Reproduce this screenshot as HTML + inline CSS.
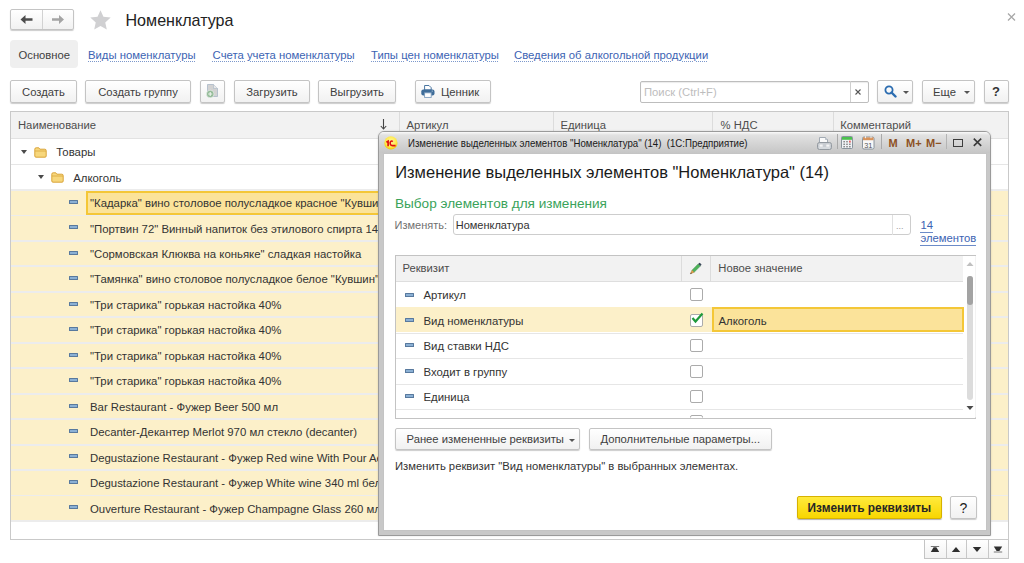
<!DOCTYPE html>
<html><head><meta charset="utf-8">
<style>
*{box-sizing:border-box;margin:0;padding:0}
html,body{width:1024px;height:563px;overflow:hidden;background:#fff}
body{position:relative;font-family:"Liberation Sans",sans-serif;font-size:11.25px;color:#333}
.a{position:absolute}
.t{position:absolute;white-space:nowrap;line-height:1}
.btn{position:absolute;border:1px solid #c4c4c4;border-radius:2px;background:linear-gradient(#ffffff,#f1f1f1);box-shadow:0 1px 1px rgba(0,0,0,.2);color:#404040;white-space:nowrap;line-height:1}
.lnk{position:absolute;white-space:nowrap;line-height:1;font-size:11.32px;color:#3c63b3;text-decoration:underline dotted #7c98cc;text-underline-offset:1.5px;text-decoration-thickness:1px}
.row{position:absolute;left:11px;width:996px}
.dash{position:absolute;width:9px;height:4px;background:#8bb0d4;border:1px solid #58799e;border-radius:0.5px}
.folder{position:absolute;width:12px;height:10px}
.tri{position:absolute;width:0;height:0;border-left:3.5px solid transparent;border-right:3.5px solid transparent;border-top:4px solid #4a4a4a}
.cb{position:absolute;width:13px;height:13px;border:1px solid #ababab;background:#fff;border-radius:2px}
</style></head><body>

<!-- nav buttons -->
<div class="btn" style="left:10px;top:9px;width:64px;height:21px"></div>
<div class="a" style="left:42px;top:10px;width:1px;height:19px;background:#d2d2d2"></div>
<svg class="a" style="left:20px;top:14px" width="14" height="11" viewBox="0 0 14 11"><path d="M0.5 5.5 L5.5 1 L5.5 4.2 L12.5 4.2 L12.5 6.8 L5.5 6.8 L5.5 10 Z" fill="#4d4d4d"/></svg>
<svg class="a" style="left:51px;top:14px" width="14" height="11" viewBox="0 0 14 11"><path d="M13 5.5 L8 1 L8 4.2 L1 4.2 L1 6.8 L8 6.8 L8 10 Z" fill="#a4a4a4"/></svg>
<!-- star -->
<svg class="a" style="left:89.8px;top:9.6px" width="21" height="21" viewBox="0 0 21 21"><path d="M10.50 0.20 L13.44 6.85 L20.68 7.59 L15.26 12.45 L16.79 19.56 L10.50 15.90 L4.21 19.56 L5.74 12.45 L0.32 7.59 L7.56 6.85 Z" fill="#d0d0d2"/></svg>
<div class="t" style="left:125.5px;top:12.4px;font-size:16.1px;color:#222">Номенклатура</div>
<svg class="a" style="left:1007px;top:13px" width="9" height="8" viewBox="0 0 9 8"><path d="M1 0.5 L8 7.5 M8 0.5 L1 7.5" stroke="#a8a8a8" stroke-width="1.3"/></svg>

<!-- tabs -->
<div class="a" style="left:10px;top:40px;width:68px;height:28px;background:#efefef;border-radius:4px"></div>
<div class="t" style="left:18.5px;top:49.5px;color:#404040">Основное</div>
<div class="lnk" style="left:88px;top:49.5px">Виды номенклатуры</div>
<div class="lnk" style="left:212.6px;top:49.5px">Счета учета номенклатуры</div>
<div class="lnk" style="left:371px;top:49.5px">Типы цен номенклатуры</div>
<div class="lnk" style="left:514px;top:49.5px">Сведения об алкогольной продукции</div>

<!-- toolbar -->
<div class="btn" style="left:10px;top:80px;width:67px;height:22.6px"></div><div class="t" style="left:10px;width:67px;text-align:center;top:87px;color:#404040">Создать</div>
<div class="btn" style="left:85px;top:80px;width:106px;height:22.6px"></div><div class="t" style="left:85px;width:106px;text-align:center;top:87px;color:#404040">Создать группу</div>
<div class="btn" style="left:200px;top:80px;width:25px;height:22.6px"></div>
<svg class="a" style="left:205px;top:84px" width="14" height="14" viewBox="0 0 14 14"><path d="M2.5 0.5 L8.5 0.5 L12.5 4.5 L12.5 12.5 L2.5 12.5 Z" fill="#d2d2d2" stroke="#a9b8c8" stroke-width="0.8"/><path d="M8.5 0.5 L8.5 4.5 L12.5 4.5" fill="#e8e8e8" stroke="#a9b8c8" stroke-width="0.6"/><circle cx="5.2" cy="10" r="3.8" fill="#94bb98" stroke="#f4f4f4" stroke-width="0.6"/><path d="M3.2 10 H7.2 M5.2 8 V12" stroke="#eef5ee" stroke-width="1.1"/></svg>
<div class="btn" style="left:234px;top:80px;width:76px;height:22.6px"></div><div class="t" style="left:234px;width:76px;text-align:center;top:87px;color:#404040">Загрузить</div>
<div class="btn" style="left:318px;top:80px;width:78px;height:22.6px"></div><div class="t" style="left:318px;width:78px;text-align:center;top:87px;color:#404040">Выгрузить</div>
<div class="btn" style="left:415px;top:80px;width:76px;height:22.6px"></div><div class="t" style="left:441px;top:87px;color:#404040">Ценник</div>
<svg class="a" style="left:421px;top:85px" width="14" height="13" viewBox="0 0 14 13"><path d="M3.6 0.5 L8 0.5 L10.2 2.7 L10.2 5 L3.6 5 Z" fill="#fff" stroke="#4a76a0" stroke-width="1"/><rect x="0.3" y="4.6" width="13.2" height="5.8" rx="2" fill="#3f6d99"/><rect x="3.6" y="7.8" width="6.6" height="4.6" fill="#fff" stroke="#7c9cbc" stroke-width="0.9"/><rect x="10.6" y="5.6" width="1.3" height="1" fill="#a9c0d6"/></svg>
<div class="a" style="left:640px;top:80.5px;width:228.5px;height:22px;border:1px solid #bdbdbd;border-radius:2px;background:#fff;box-shadow:inset 0 1px 1px rgba(0,0,0,.08)"></div>
<div class="a" style="left:849.5px;top:81px;width:1px;height:21px;background:#cfcfcf"></div>
<div class="t" style="left:644px;top:87px;color:#bdbdbd">Поиск (Ctrl+F)</div>
<svg class="a" style="left:855.3px;top:88.8px" width="6" height="6" viewBox="0 0 6 6"><path d="M0.5 0.5 L5.5 5.5 M5.5 0.5 L0.5 5.5" stroke="#555" stroke-width="1.1"/></svg>
<div class="btn" style="left:877px;top:80px;width:36px;height:22.6px"></div>
<svg class="a" style="left:884px;top:85px" width="13" height="13" viewBox="0 0 13 13"><circle cx="5" cy="5" r="3.6" fill="none" stroke="#2b6cb0" stroke-width="1.8"/><path d="M7.5 7.5 L11.5 11.5" stroke="#2b6cb0" stroke-width="2.4" stroke-linecap="round"/></svg>
<div class="tri" style="left:902.5px;top:91px;border-top-color:#555;border-left-width:3px;border-right-width:3px;border-top-width:3px"></div>
<div class="btn" style="left:921.5px;top:80px;width:53.0px;height:22.6px"></div><div class="t" style="left:933px;top:87px;color:#404040">Еще</div>
<div class="tri" style="left:963.5px;top:91px;border-top-color:#555;border-left-width:3px;border-right-width:3px;border-top-width:3px"></div>
<div class="btn" style="left:983.5px;top:80px;width:25.0px;height:22.6px"></div>
<div class="t" style="left:983.5px;width:25px;text-align:center;top:85px;font-size:13px;font-weight:bold;color:#333">?</div>
<!-- main table -->
<div class="a" style="left:10px;top:111px;width:998.5px;height:428.5px;border:1px solid #c9c9c9;background:#fff"></div>
<div class="a" style="left:11px;top:112px;width:996.5px;height:27px;background:#f2f2f2;border-bottom:1px solid #e2e2e2"></div>
<div class="a" style="left:399.3px;top:112px;width:1px;height:26.5px;background:#dcdcdc"></div>
<div class="a" style="left:552.6px;top:112px;width:1px;height:26.5px;background:#dcdcdc"></div>
<div class="a" style="left:712.3px;top:112px;width:1px;height:26.5px;background:#dcdcdc"></div>
<div class="a" style="left:832.9px;top:112px;width:1px;height:26.5px;background:#dcdcdc"></div>
<div class="t" style="left:18px;top:120.1px;color:#4d4d4d">Наименование</div>
<svg class="a" style="left:380px;top:119px" width="7" height="11" viewBox="0 0 7 11"><path d="M3.5 0 V10 M0.8 7 L3.5 10 L6.2 7" fill="none" stroke="#444" stroke-width="1.1"/></svg>
<div class="t" style="left:406.6px;top:120.1px;color:#4d4d4d">Артикул</div>
<div class="t" style="left:560.4px;top:120.1px;color:#4d4d4d">Единица</div>
<div class="t" style="left:720.6px;top:120.1px;color:#4d4d4d">% НДС</div>
<div class="t" style="left:840.2px;top:120.1px;color:#4d4d4d">Комментарий</div>
<div class="a" style="left:11px;top:163.90px;width:996.5px;height:1px;background:#e6e6e6"></div>
<div class="a" style="left:11px;top:189.35px;width:996.5px;height:1px;background:#e6e6e6"></div>
<div class="tri" style="left:20.8px;top:150px"></div>
<svg class="a" style="left:34px;top:146.5px" width="13" height="11" viewBox="0 0 13 11"><path d="M0.8 2.2 Q0.8 0.8 2.2 0.8 L4.8 0.8 L5.8 2.2 L10.8 2.2 Q12.2 2.2 12.2 3.6 L12.2 9 Q12.2 10.2 11 10.2 L2 10.2 Q0.8 10.2 0.8 9 Z" fill="#f7d77c" stroke="#d9a43a" stroke-width="1"/><path d="M1 4 H12" stroke="#d9a43a" stroke-width="0.8"/></svg>
<div class="t" style="left:56.3px;top:147.20px;font-size:11.36px;color:#333">Товары</div>
<div class="tri" style="left:37.6px;top:175.2px"></div>
<svg class="a" style="left:51px;top:172px" width="13" height="11" viewBox="0 0 13 11"><path d="M0.8 2.2 Q0.8 0.8 2.2 0.8 L4.8 0.8 L5.8 2.2 L10.8 2.2 Q12.2 2.2 12.2 3.6 L12.2 9 Q12.2 10.2 11 10.2 L2 10.2 Q0.8 10.2 0.8 9 Z" fill="#f7d77c" stroke="#d9a43a" stroke-width="1"/><path d="M1 4 H12" stroke="#d9a43a" stroke-width="0.8"/></svg>
<div class="t" style="left:73.2px;top:172.65px;font-size:11.36px;color:#333">Алкоголь</div>
<div class="a" style="left:11px;top:189px;width:996.5px;height:333px;background:#ececec"></div>
<div class="a" style="left:11px;top:191.00px;width:996.5px;height:23.6px;background:#fcf0c9"></div>
<div class="dash" style="left:69.4px;top:199.90px"></div>
<div class="t" style="left:90px;top:198.10px;font-size:11.36px;color:#333">"Кадарка" вино столовое полусладкое красное "Кувшин"</div>
<div class="a" style="left:11px;top:216.45px;width:996.5px;height:23.6px;background:#fcf0c9"></div>
<div class="dash" style="left:69.4px;top:225.35px"></div>
<div class="t" style="left:90px;top:223.55px;font-size:11.36px;color:#333">"Портвин 72" Винный напиток без этилового спирта 14,5%</div>
<div class="a" style="left:11px;top:241.90px;width:996.5px;height:23.6px;background:#fcf0c9"></div>
<div class="dash" style="left:69.4px;top:250.80px"></div>
<div class="t" style="left:90px;top:249.00px;font-size:11.36px;color:#333">"Сормовская Клюква на коньяке" сладкая настойка</div>
<div class="a" style="left:11px;top:267.35px;width:996.5px;height:23.6px;background:#fcf0c9"></div>
<div class="dash" style="left:69.4px;top:276.25px"></div>
<div class="t" style="left:90px;top:274.45px;font-size:11.36px;color:#333">"Тамянка" вино столовое полусладкое белое "Кувшин"</div>
<div class="a" style="left:11px;top:292.80px;width:996.5px;height:23.6px;background:#fcf0c9"></div>
<div class="dash" style="left:69.4px;top:301.70px"></div>
<div class="t" style="left:90px;top:299.90px;font-size:11.36px;color:#333">"Три старика" горькая настойка 40%</div>
<div class="a" style="left:11px;top:318.25px;width:996.5px;height:23.6px;background:#fcf0c9"></div>
<div class="dash" style="left:69.4px;top:327.15px"></div>
<div class="t" style="left:90px;top:325.35px;font-size:11.36px;color:#333">"Три старика" горькая настойка 40%</div>
<div class="a" style="left:11px;top:343.70px;width:996.5px;height:23.6px;background:#fcf0c9"></div>
<div class="dash" style="left:69.4px;top:352.60px"></div>
<div class="t" style="left:90px;top:350.80px;font-size:11.36px;color:#333">"Три старика" горькая настойка 40%</div>
<div class="a" style="left:11px;top:369.15px;width:996.5px;height:23.6px;background:#fcf0c9"></div>
<div class="dash" style="left:69.4px;top:378.05px"></div>
<div class="t" style="left:90px;top:376.25px;font-size:11.36px;color:#333">"Три старика" горькая настойка 40%</div>
<div class="a" style="left:11px;top:394.60px;width:996.5px;height:23.6px;background:#fcf0c9"></div>
<div class="dash" style="left:69.4px;top:403.50px"></div>
<div class="t" style="left:90px;top:401.70px;font-size:11.36px;color:#333">Bar Restaurant - Фужер Beer 500 мл</div>
<div class="a" style="left:11px;top:420.05px;width:996.5px;height:23.6px;background:#fcf0c9"></div>
<div class="dash" style="left:69.4px;top:428.95px"></div>
<div class="t" style="left:90px;top:427.15px;font-size:11.36px;color:#333">Decanter-Декантер Merlot 970 мл стекло (decanter)</div>
<div class="a" style="left:11px;top:445.50px;width:996.5px;height:23.6px;background:#fcf0c9"></div>
<div class="dash" style="left:69.4px;top:454.40px"></div>
<div class="t" style="left:90px;top:452.60px;font-size:11.36px;color:#333">Degustazione Restaurant - Фужер Red wine With Pour Aerator 450 мл</div>
<div class="a" style="left:11px;top:470.95px;width:996.5px;height:23.6px;background:#fcf0c9"></div>
<div class="dash" style="left:69.4px;top:479.85px"></div>
<div class="t" style="left:90px;top:478.05px;font-size:11.36px;color:#333">Degustazione Restaurant - Фужер White wine 340 ml белое</div>
<div class="a" style="left:11px;top:496.40px;width:996.5px;height:23.6px;background:#fcf0c9"></div>
<div class="dash" style="left:69.4px;top:505.30px"></div>
<div class="t" style="left:90px;top:503.50px;font-size:11.36px;color:#333">Ouverture Restaurant - Фужер Champagne Glass 260 мл (набор 6 шт)</div>
<div class="a" style="left:86px;top:190.50px;width:300px;height:24px;border:2px solid #f4c737;background:#fbe39a"></div>
<div class="t" style="left:90px;top:198.10px;font-size:11.36px;color:#333">"Кадарка" вино столовое полусладкое красное "Кувшин"</div>
<!-- pagination -->
<div class="a" style="left:924px;top:539.5px;width:84.5px;height:19px;border:1px solid #c4c4c4;border-top:none;background:linear-gradient(#fff,#f2f2f2)"></div>
<div class="a" style="left:945.5px;top:539.5px;width:1px;height:18.5px;background:#c8c8c8"></div>
<div class="a" style="left:966.4px;top:539.5px;width:1px;height:18.5px;background:#c8c8c8"></div>
<div class="a" style="left:987.5px;top:539.5px;width:1px;height:18.5px;background:#c8c8c8"></div>
<svg class="a" style="left:930px;top:545px" width="10" height="8" viewBox="0 0 10 8"><path d="M0.8 1.5 H9.2" stroke="#777" stroke-width="1"/><path d="M0.8 7 L3.6 2.2 L6.4 2.2 L9.2 7 Z" fill="#2e2e2e"/></svg>
<svg class="a" style="left:951px;top:546px" width="10" height="7" viewBox="0 0 10 7"><path d="M0.8 6 L5 1 L9.2 6 Z" fill="#2e2e2e"/></svg>
<svg class="a" style="left:972px;top:546px" width="10" height="7" viewBox="0 0 10 7"><path d="M0.8 1 L5 6 L9.2 1 Z" fill="#2e2e2e"/></svg>
<svg class="a" style="left:993px;top:545px" width="10" height="8" viewBox="0 0 10 8"><path d="M0.8 1.5 L9.2 1.5 L6.4 6 L3.6 6 Z" fill="#2e2e2e"/><path d="M0.8 7 H9.2" stroke="#777" stroke-width="1"/></svg>
<!-- dialog -->
<div class="a" style="left:378.3px;top:131.3px;width:613px;height:404.5px;border-radius:6px 6px 0 0;background:linear-gradient(#ececec,#d3d3d3 21px,#c8c8c8 21px,#c8c8c8);border:1px solid #9a9a9a;box-shadow:0 0 2px rgba(0,0,0,.15)"></div>
<div class="a" style="left:379.3px;top:132.3px;width:611px;height:20.5px;border-radius:5px 5px 0 0;background:linear-gradient(#fafafa,#e2e2e2 3px,#d6d6d6 50%,#c6c6c6)"></div>
<div class="a" style="left:383px;top:152.8px;width:604px;height:378px;background:#fff;border:1px solid #c4c4c4"></div>
<svg class="a" style="left:383.8px;top:136.2px" width="14" height="14" viewBox="0 0 14 14"><defs><radialGradient id="g1" cx="0.5" cy="0.4" r="0.6"><stop offset="0" stop-color="#fff9a0"/><stop offset="0.7" stop-color="#ffe84a"/><stop offset="1" stop-color="#f0c400"/></radialGradient></defs><circle cx="6.9" cy="6.9" r="6.6" fill="url(#g1)"/><path transform="translate(-0.2 1)" d="M2.6 5.3 L4.3 4.2 L4.3 9.2" fill="none" stroke="#e01010" stroke-width="1.7"/><path transform="translate(0 1)" d="M8.8 4.6 Q7.6 3.5 6.6 4.6 Q5.7 5.8 6.4 7.3 Q7 8.6 8.6 8.6 L11.6 8.6" fill="none" stroke="#e01010" stroke-width="1.6"/></svg>
<div class="t" style="left:407.7px;top:138px;font-size:10.6px;color:#1a1a1a;transform:scaleX(0.91);transform-origin:0 0">Изменение выделенных элементов "Номенклатура" (14)&nbsp; (1С:Предприятие)</div>
<svg class="a" style="left:816.5px;top:136.5px" width="15" height="13" viewBox="0 0 15 13"><path d="M2.5 0.5 L8.5 0.5 L10.5 2.5 L10.5 6 L2.5 6 Z" fill="#fafafa" stroke="#9aa3ad" stroke-width="0.9"/><path d="M8.5 0.5 V2.5 H10.5" fill="#dfe5ea" stroke="#9aa3ad" stroke-width="0.6"/><rect x="0.5" y="5.5" width="14" height="7" rx="2" fill="#c9cdd2" stroke="#8d949b" stroke-width="0.9"/><rect x="2.5" y="7.5" width="3.2" height="2.2" fill="#f4f4f4"/><rect x="9.3" y="7.5" width="3.2" height="2.2" fill="#f4f4f4"/><path d="M2 11 H13" stroke="#eef0f2" stroke-width="0.8"/></svg>
<div class="a" style="left:836.5px;top:134px;width:1px;height:14.5px;background:#a9a9a9"></div>
<div class="a" style="left:881px;top:134px;width:1px;height:14.5px;background:#a9a9a9"></div>
<div class="a" style="left:946px;top:134px;width:1px;height:14.5px;background:#b4b4b4"></div>
<svg class="a" style="left:841px;top:136.2px" width="12" height="13" viewBox="0 0 12 13"><rect x="0.5" y="0.5" width="11" height="12" rx="1" fill="#eef1f4" stroke="#7f8a94" stroke-width="0.9"/><rect x="1" y="1" width="10" height="2.8" fill="#4cc14f"/><g fill="#4a4a4a"><rect x="2.6" y="5" width="1" height="1.4"/><rect x="5.5" y="5" width="1" height="1.4"/><rect x="2.6" y="7.6" width="1" height="1.4"/><rect x="5.5" y="7.6" width="1" height="1.4"/><rect x="8.4" y="7.6" width="1" height="1.4"/><rect x="2.6" y="10" width="1" height="1.4"/><rect x="5.5" y="10" width="1" height="1.4"/><rect x="8.4" y="10" width="1" height="1.4"/></g><rect x="8.2" y="4.6" width="1.4" height="2" fill="#e43b3b"/></svg>
<svg class="a" style="left:862px;top:136px" width="12.5" height="13.5" viewBox="0 0 12.5 13.5"><rect x="0.5" y="1" width="11.5" height="12" rx="1.5" fill="#f7f8f9" stroke="#7f8a94" stroke-width="0.9"/><rect x="1" y="1.4" width="10.5" height="2.8" fill="#d8925a"/><rect x="3" y="0.2" width="1" height="2" fill="#f0f0f0"/><rect x="8.5" y="0.2" width="1" height="2" fill="#f0f0f0"/><text x="6.25" y="11.6" font-size="7.4" text-anchor="middle" font-family="Liberation Sans" fill="#555">31</text></svg>
<div class="t" style="left:888.5px;top:138px;font-size:11px;font-weight:bold;color:#8d5124">M</div>
<div class="t" style="left:906px;top:138px;font-size:11px;font-weight:bold;color:#8d5124">M+</div>
<div class="t" style="left:926px;top:138px;font-size:11px;font-weight:bold;color:#8d5124">M−</div>
<div class="a" style="left:953px;top:138.7px;width:9.5px;height:8px;border:1px solid #3d3d3d;border-top-width:1.6px"></div>
<svg class="a" style="left:972.5px;top:138.3px" width="9" height="8.5" viewBox="0 0 9 8.5"><path d="M0.8 0.6 L8.2 7.9 M8.2 0.6 L0.8 7.9" stroke="#3a3a3a" stroke-width="1.6"/></svg>
<div class="t" style="left:395.2px;top:163.6px;font-size:16.5px;color:#1a1a1a">Изменение выделенных элементов "Номенклатура" (14)</div>
<div class="t" style="left:395px;top:196.6px;font-size:13.6px;color:#3aa35a">Выбор элементов для изменения</div>
<div class="t" style="left:394.6px;top:220px;font-size:11px;color:#707070">Изменять:</div>
<div class="a" style="left:452.5px;top:214.4px;width:458px;height:21px;border:1px solid #cdcdcd;border-radius:3px;background:#fff"></div>
<div class="a" style="left:891.7px;top:215px;width:1px;height:20px;background:#e0e0e0"></div>
<div class="t" style="left:896px;top:222px;font-size:9px;color:#9a9a9a">...</div>
<div class="t" style="left:455.7px;top:220px;font-size:11px;color:#333">Номенклатура</div>
<div class="t" style="left:920.4px;top:219.8px;color:#3c63b3;border-bottom:1px solid #6c8bc8;padding-bottom:1px">14</div>
<div class="t" style="left:920.4px;top:232.6px;color:#3c63b3;border-bottom:1px solid #6c8bc8;padding-bottom:1px">элементов</div>
<div class="a" style="left:394.8px;top:254.5px;width:581.5px;height:164px;border:1px solid #c3c3c3;background:#fff;overflow:hidden"></div>
<div class="a" style="left:0;top:0;width:1024px;height:563px;clip-path:inset(255.5px 48.2px 145.5px 395.8px)">
<div class="a" style="left:395.8px;top:255.5px;width:567.7px;height:26px;background:#f2f2f2;border-bottom:1px solid #dedede"></div>
<div class="a" style="left:963.5px;top:255.5px;width:12px;height:162px;background:#fff"></div>
<div class="a" style="left:681px;top:255.5px;width:1px;height:26px;background:#dcdcdc"></div>
<div class="a" style="left:710.3px;top:255.5px;width:1px;height:26px;background:#dcdcdc"></div>
<div class="t" style="left:402.4px;top:263.2px;color:#4d4d4d">Реквизит</div>
<svg class="a" style="left:688.5px;top:261.5px" width="13" height="13" viewBox="0 0 13 13"><path d="M3 8.2 L9.2 2 L11.3 4.1 L5.1 10.3 Z" fill="#4cb35a" stroke="#3a8a45" stroke-width="0.5"/><path d="M9.2 2 L10.2 1 Q10.6 0.6 11 1 L12.3 2.3 Q12.7 2.7 12.3 3.1 L11.3 4.1 Z" fill="#3b4a5a"/><path d="M3 8.2 L1.3 11.9 L5.1 10.3 Z" fill="#e9a545" stroke="#9a6a30" stroke-width="0.4"/><path d="M1.3 11.9 L2 10.4 L2.8 11.2 Z" fill="#333"/></svg>
<div class="t" style="left:718.3px;top:263.2px;color:#4d4d4d">Новое значение</div>
<div class="a" style="left:395.8px;top:307.40px;width:567.7px;height:1px;background:#e6e6e6"></div>
<div class="dash" style="left:405.4px;top:292.50px"></div>
<div class="t" style="left:423.5px;top:290.20px;font-size:11.36px;color:#333">Артикул</div>
<div class="cb" style="left:689.5px;top:288.20px"></div>
<div class="a" style="left:395.8px;top:307.45px;width:567.7px;height:25px;background:#fcf0c9"></div>
<div class="a" style="left:395.8px;top:332.85px;width:567.7px;height:1px;background:#e6e6e6"></div>
<div class="dash" style="left:405.4px;top:317.95px"></div>
<div class="t" style="left:423.5px;top:315.65px;font-size:11.36px;color:#333">Вид номенклатуры</div>
<div class="cb" style="left:689.5px;top:313.65px"></div>
<div class="a" style="left:395.8px;top:358.30px;width:567.7px;height:1px;background:#e6e6e6"></div>
<div class="dash" style="left:405.4px;top:343.40px"></div>
<div class="t" style="left:423.5px;top:341.10px;font-size:11.36px;color:#333">Вид ставки НДС</div>
<div class="cb" style="left:689.5px;top:339.10px"></div>
<div class="a" style="left:395.8px;top:383.75px;width:567.7px;height:1px;background:#e6e6e6"></div>
<div class="dash" style="left:405.4px;top:368.85px"></div>
<div class="t" style="left:423.5px;top:366.55px;font-size:11.36px;color:#333">Входит в группу</div>
<div class="cb" style="left:689.5px;top:364.55px"></div>
<div class="a" style="left:395.8px;top:409.20px;width:567.7px;height:1px;background:#e6e6e6"></div>
<div class="dash" style="left:405.4px;top:394.30px"></div>
<div class="t" style="left:423.5px;top:392.00px;font-size:11.36px;color:#333">Единица</div>
<div class="cb" style="left:689.5px;top:390.00px"></div>
<div class="a" style="left:395.8px;top:434.65px;width:567.7px;height:1px;background:#e6e6e6"></div>
<div class="dash" style="left:405.4px;top:419.75px"></div>
<div class="t" style="left:423.5px;top:417.45px;font-size:11.36px;color:#333">Имя</div>
<div class="cb" style="left:689.5px;top:415.45px"></div>
<svg class="a" style="left:690px;top:311.15px" width="14" height="14" viewBox="0 0 14 14"><path d="M2.5 7 L5.5 10.5 L12.5 2.5" fill="none" stroke="#1f9a3c" stroke-width="2.2"/></svg>
<div class="a" style="left:711.5px;top:307.45px;width:252px;height:25px;border:2px solid #f4c737;background:#fbe39a"></div>
<div class="t" style="left:718.5px;top:315.65px;font-size:11.36px;color:#333">Алкоголь</div>
<svg class="a" style="left:965.5px;top:261px" width="8" height="6" viewBox="0 0 8 6"><path d="M0.5 5 L4 1 L7.5 5 Z" fill="#c0c0c0"/></svg>
<div class="a" style="left:966.5px;top:276px;width:6px;height:124px;background:#dcdcdc;border-radius:3px"></div>
<div class="a" style="left:966.5px;top:276px;width:6px;height:29px;background:#a3a3a3;border-radius:3px"></div>
<svg class="a" style="left:965.5px;top:405px" width="8" height="6" viewBox="0 0 8 6"><path d="M0.5 1 L4 5 L7.5 1 Z" fill="#4a4a4a"/></svg>
</div>
<div class="btn" style="left:394.5px;top:427.6px;width:185.5px;height:22px"></div>
<div class="t" style="left:406.5px;top:433.8px;color:#404040">Ранее измененные реквизиты</div>
<div class="tri" style="left:569px;top:439px;border-top-color:#555;border-left-width:3px;border-right-width:3px;border-top-width:3px"></div>
<div class="btn" style="left:588.6px;top:427.6px;width:183px;height:22px"></div>
<div class="t" style="left:600.5px;top:433.8px;color:#404040">Дополнительные параметры...</div>
<div class="t" style="left:395px;top:461px;color:#333">Изменить реквизит "Вид номенклатуры" в выбранных элементах.</div>
<div class="a" style="left:796.8px;top:496.3px;width:145.2px;height:22.7px;border:1px solid #d7b200;border-radius:2px;background:linear-gradient(#ffea3c,#f8d600);box-shadow:0 1px 1px rgba(0,0,0,.3)"></div>
<div class="t" style="left:796.8px;width:145.2px;text-align:center;top:502.9px;font-weight:bold;font-size:11.85px;color:#262626">Изменить реквизиты</div>
<div class="btn" style="left:950.2px;top:496.3px;width:26.5px;height:22.7px"></div>
<div class="t" style="left:950.2px;width:26.3px;text-align:center;top:501.2px;font-size:14px;color:#222">?</div>
</body></html>
